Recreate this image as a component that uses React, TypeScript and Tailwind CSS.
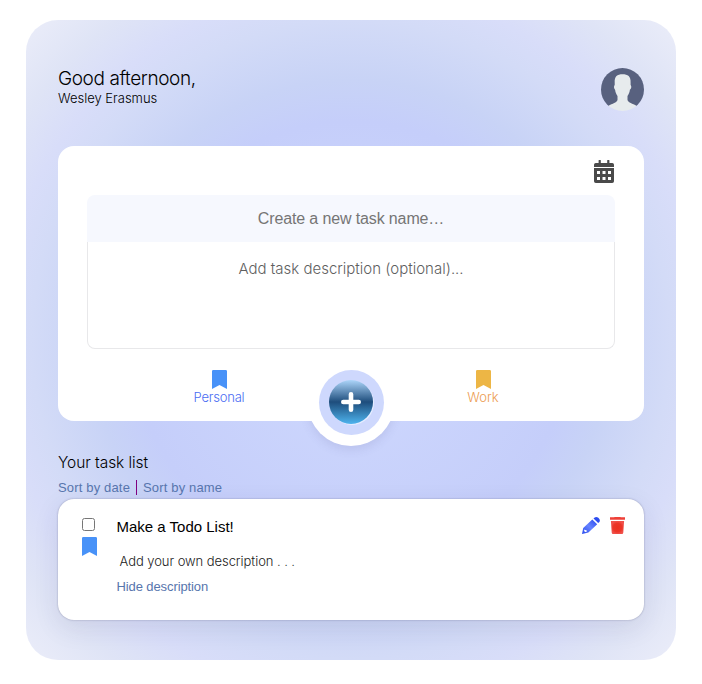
import React from "react";

const sans = "font-['Liberation_Sans',sans-serif]";

function Bookmark({ className }: { className: string }) {
  return (
    <svg viewBox="0 0 15 19" className={`block h-[19px] w-[15px] ${className}`} fill="currentColor">
      <path d="M1.3 0h12.4Q15 0 15 1.3V19l-7.5-3.9L0 19V1.3Q0 0 1.3 0Z" />
    </svg>
  );
}

function Avatar() {
  return (
    <svg viewBox="0 0 43 43" className="block size-[43px]">
      <defs>
        <clipPath id="avatar-clip"><circle cx="21.5" cy="21.5" r="21.5" /></clipPath>
      </defs>
      <g clipPath="url(#avatar-clip)">
        <rect width="43" height="38" fill="#58617f" />
        <path
          fill="#e7ebed"
          d="M21.5 6.2C16.2 6.2 13.3 8.3 13.7 14.5L13.7 17C12.5 17.8 13 21 14.1 21.8C14.4 24.5 15.4 26.5 16.5 28V32C15.5 34.7 11.8 35.4 7.2 38L3 43H40L35.8 38C31.2 35.4 27.5 34.7 26.5 32V28C27.6 26.5 28.6 24.5 28.9 21.8C30.4 21 30.8 17.8 29.6 17V14.5C30 8.3 26.8 6.2 21.5 6.2Z"
        />
      </g>
    </svg>
  );
}

function CalendarIcon() {
  return (
    <svg viewBox="0 0 20 23" className="mr-px block h-[23px] w-5" fill="#4a4a4a">
      <path d="M4.6.8a1.1 1.1 0 0 1 2.2 0V3h6.4V.8a1.1 1.1 0 0 1 2.2 0V3h2.8Q20 3 20 4.8V7H0V4.8Q0 3 1.8 3h2.8Z" />
      <path
        fillRule="evenodd"
        d="M0 8h20v13.2q0 1.8-1.8 1.8H1.8Q0 23 0 21.2ZM3 11v3h3v-3ZM8.5 11v3h3v-3ZM14 11v3h3v-3ZM3 17v3h3v-3ZM8.5 17v3h3v-3ZM14 17v3h3v-3Z"
      />
    </svg>
  );
}

function PencilIcon() {
  return (
    <svg viewBox="0 0 18 17" className="block h-[17px] w-[18px]">
      <defs>
        <linearGradient id="pencil" x1="0" y1="1" x2="1" y2="0">
          <stop offset="0" stopColor="#2849ed" />
          <stop offset=".5" stopColor="#6683ff" />
          <stop offset="1" stopColor="#2849ed" />
        </linearGradient>
      </defs>
      <path
        fill="url(#pencil)"
        fillRule="evenodd"
        d="M10.3 2.6l4.9 4.6-8.8 8.3L0 17l1.2-6ZM2.4 12.4l-.3 1.7 1.1 1 1.6-.4-.2-1.4-1.4-.2Z"
      />
      <path fill="#2c4cf0" d="M11.5 1.5 12.7.5Q14.2-.5 16 .6L17 1.6Q18.5 3.2 17.4 4.9l-1.2 1.2Z" />
    </svg>
  );
}

function TrashIcon() {
  return (
    <svg viewBox="0 0 15 17" className="block h-[17px] w-[15px]">
      <defs>
        <radialGradient id="trash">
          <stop offset="0" stopColor="#ea3020" />
          <stop offset=".65" stopColor="#ec3528" />
          <stop offset="1" stopColor="#f0504a" />
        </radialGradient>
      </defs>
      <path fill="#ee4038" d="M0 .3h4.2L4.6 0h5.8l.4.3H15V2.8H0Z" />
      <path fill="url(#trash)" d="M.9 4.1h13.2l-.8 11.4Q13.2 17 11.9 17H3.1Q1.8 17 1.7 15.5Z" />
    </svg>
  );
}

export default function App() {
  return (
    <div className="h-[684px] w-[702px] bg-white px-[26px] pt-5 font-['Inter',sans-serif] font-light text-black">
      <main className="h-[640px] rounded-[32px] bg-[radial-gradient(circle,#cfd9fe_0%,#c5cefa_48%,#c8d3f6_57%,#d3dbf7_70%,#d8ddf9_77%,#dfe4f6_87%,#ebedf9_100%)] px-8 pt-12">
        <header className="flex h-[78px] items-start justify-between">
          <div className="whitespace-nowrap">
            <h1 className="h-[21px] text-[19px] font-[260] leading-[22px] tracking-[-0.41px]">Good afternoon,</h1>
            <p className="text-[13px] font-[270] leading-[18px]">Wesley Erasmus</p>
          </div>
          <Avatar />
        </header>

        <section className="relative h-[275px] rounded-2xl bg-white px-[29px] pt-[14px]">
          <div className="absolute left-1/2 top-[213px] size-[87px] -translate-x-1/2 rounded-full bg-white shadow-[0_4px_10px_rgba(90,90,150,0.14)] [clip-path:inset(62px_-20px_-20px_-20px)]" />
          <div className="flex h-[35px] justify-end">
            <CalendarIcon />
          </div>
          <div className={`flex h-[47px] items-center justify-center rounded-t-lg bg-[#f6f8fe] text-[16px] font-normal tracking-[-0.13px] text-[#757575] ${sans}`}>
            Create a new task name…
          </div>
          <div className="h-[107px] rounded-b-lg border border-t-0 border-[#e8e8ea] pt-[15px] text-center text-[15px] leading-6 text-[#5f5f5f]">
            <span className="whitespace-nowrap">Add task description (optional)...</span>
          </div>
          <div className="relative grid grid-cols-2 pt-[21px] text-[13px] font-[260] leading-[15px]">
            <div className="flex flex-col items-center text-[#4a6cf3]">
              <Bookmark className="text-[#4892f8]" />
              <span className="pt-px tracking-[-0.2px]">Personal</span>
            </div>
            <div className="flex flex-col items-center text-[#ec9b50]">
              <Bookmark className="text-[#edb645]" />
              <span className="pt-px">Work</span>
            </div>
            <button className="absolute left-[231.5px] top-[21px] flex size-[65px] items-center justify-center rounded-full bg-[#ced8fd] pb-px pr-px">
              <span className="flex size-11 items-center justify-center rounded-full bg-[linear-gradient(#add5fa_0%,#1e4d7c_50%,#4eb4ee_100%)] shadow-[1px_1px_0_#e5edff]">
                <svg viewBox="0 0 20 20" className="size-5" stroke="white" strokeWidth="4.6" strokeLinecap="round">
                  <path d="M10 2.3v15.4M2.3 10h15.4" />
                </svg>
              </span>
            </button>
          </div>
        </section>

        <div className="h-[78px] pt-[31px]">
          <h2 className="h-7 text-[15.5px] leading-[22px] tracking-[-0.07px]">Your task list</h2>
          <div className={`flex items-center text-[13px] font-normal leading-[15px] tracking-[0.16px] text-[#5775ad] ${sans}`}>
            <span className="w-[72px] whitespace-nowrap">Sort by date</span>
            <span className="ml-[6px] mr-[6px] h-[15px] w-px bg-[#800080]" />
            <span>Sort by name</span>
          </div>
        </div>

        <article className="flex h-[121px] rounded-2xl bg-white pl-6 pr-[19px] pt-[19px] shadow-[0_0_2px_rgba(50,50,93,0.4),0_8px_26px_rgba(50,50,93,0.1)]">
          <div className="w-[34.5px]">
            <input type="checkbox" className="block size-[13px]" />
            <Bookmark className="mt-[6px] text-[#4892f8]" />
          </div>
          <div className="flex-1 whitespace-nowrap">
            <h3 className={`text-[15px] font-normal leading-[18px] ${sans}`}>Make a Todo List!</h3>
            <p className="pl-[3px] pt-[16px] text-[13px] leading-[18px] tracking-[-0.06px] text-[#222]">Add your own description . . .</p>
            <div className={`pt-[9px] text-[13px] font-normal leading-[15px] tracking-[-0.1px] text-[#5775ad] ${sans}`}>Hide description</div>
          </div>
          <div className="-mt-px flex items-start gap-[10px]">
            <PencilIcon />
            <TrashIcon />
          </div>
        </article>
      </main>
    </div>
  );
}
